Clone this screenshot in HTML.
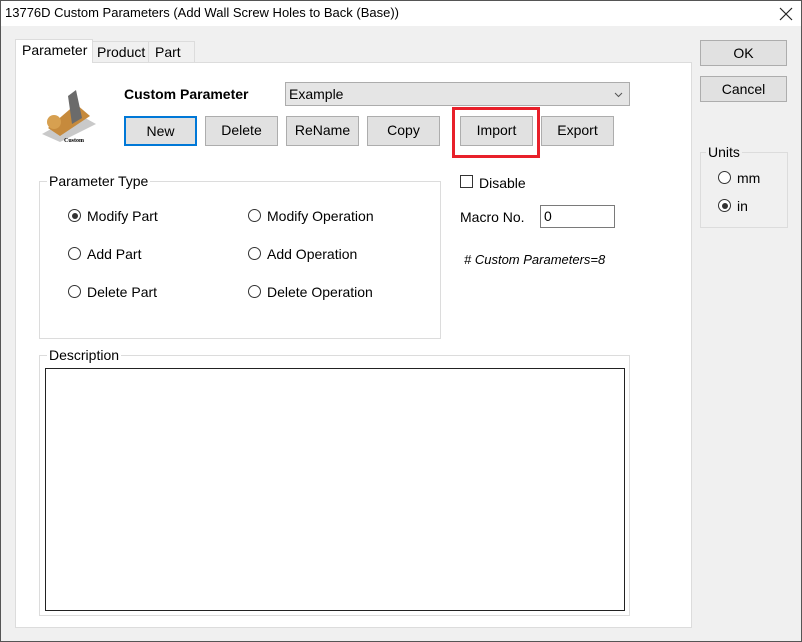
<!DOCTYPE html>
<html><head><style>
*{box-sizing:border-box;margin:0;padding:0}
body{width:802px;height:642px;background:#f0f0f0;font-family:"Liberation Sans",sans-serif;font-size:14px;color:#000;position:relative;overflow:hidden}
.a{position:absolute}
.btn{position:absolute;background:#e1e1e1;border:1px solid #adadad;text-align:center;line-height:27px;font-size:14px}
.grp{position:absolute;border:1px solid #dcdcdc}
.lg{position:absolute;top:-9px;left:7px;background:#fff;padding:0 2px}
.rad{position:absolute;width:13px;height:13px;border:1px solid #333;border-radius:50%;background:#fff}
.rad.on::after{content:"";position:absolute;left:2.5px;top:2.5px;width:6px;height:6px;border-radius:50%;background:#333}
</style></head><body>
<div class="a" style="left:0;top:0;width:802px;height:642px;border:1px solid #555;z-index:10"></div>
<div class="a" style="left:0;top:0;width:802px;height:26px;background:#fff"></div>
<div class="a" style="left:5px;top:5px;font-size:13px">13776D Custom Parameters (Add Wall Screw Holes to Back (Base))</div>
<svg class="a" style="left:779px;top:7px" width="14" height="14"><path d="M1 1L13 13M13 1L1 13" stroke="#222" stroke-width="1.2"/></svg>
<!-- tabs -->
<div class="a" style="left:15px;top:39px;width:78px;height:24px;background:#fff;border:1px solid #dcdcdc;border-bottom:none;z-index:2"></div>
<div class="a" style="left:22px;top:42px;z-index:3">Parameter</div>
<div class="a" style="left:92px;top:41px;width:57px;height:21px;border:1px solid #dcdcdc;border-bottom:none"></div>
<div class="a" style="left:97px;top:44px">Product</div>
<div class="a" style="left:148px;top:41px;width:47px;height:21px;border:1px solid #dcdcdc;border-bottom:none"></div>
<div class="a" style="left:155px;top:44px">Part</div>
<div class="a" style="left:15px;top:62px;width:677px;height:566px;background:#fff;border:1px solid #dcdcdc"></div>
<!-- icon -->
<svg class="a" style="left:38px;top:84px" width="62" height="62">
<polygon points="4,50 40,30 58,40 22,58" fill="#c9c9c9"/>
<polygon points="10,44 38,20 52,32 22,52" fill="#c68a3c"/>
<polygon points="30,12 38,6 44,34 34,40" fill="#6b6b6b"/>
<circle cx="16" cy="38" r="7" fill="#d7a050"/>
<text x="26" y="58" font-size="6" font-family="Liberation Serif" font-weight="bold">Custom</text>
</svg>
<div class="a" style="left:124px;top:86px;font-weight:bold;font-size:14px">Custom Parameter</div>
<div class="a" style="left:285px;top:82px;width:345px;height:24px;background:#e5e5e5;border:1px solid #acacac;padding:3px 3px;font-size:14px">Example<svg style="position:absolute;right:6px;top:9px" width="9" height="6"><path d="M1 1L4.5 4.5L8 1" stroke="#555" fill="none"/></svg></div>
<div class="btn" style="left:124px;top:116px;width:73px;height:30px;border:2px solid #0078d7;line-height:26px">New</div>
<div class="btn" style="left:205px;top:116px;width:73px;height:30px">Delete</div>
<div class="btn" style="left:286px;top:116px;width:73px;height:30px">ReName</div>
<div class="btn" style="left:367px;top:116px;width:73px;height:30px">Copy</div>
<div class="btn" style="left:460px;top:116px;width:73px;height:30px">Import</div>
<div class="btn" style="left:541px;top:116px;width:73px;height:30px">Export</div>
<div class="a" style="left:452px;top:107px;width:88px;height:51px;border:3px solid #e8202a"></div>
<!-- param type -->
<div class="grp" style="left:39px;top:181px;width:402px;height:158px"><div class="lg">Parameter Type</div></div>
<div class="rad on" style="left:68px;top:209px"></div><div class="a" style="left:87px;top:208px">Modify Part</div>
<div class="rad" style="left:68px;top:247px"></div><div class="a" style="left:87px;top:246px">Add Part</div>
<div class="rad" style="left:68px;top:285px"></div><div class="a" style="left:87px;top:284px">Delete Part</div>
<div class="rad" style="left:248px;top:209px"></div><div class="a" style="left:267px;top:208px">Modify Operation</div>
<div class="rad" style="left:248px;top:247px"></div><div class="a" style="left:267px;top:246px">Add Operation</div>
<div class="rad" style="left:248px;top:285px"></div><div class="a" style="left:267px;top:284px">Delete Operation</div>
<div class="a" style="left:460px;top:175px;width:13px;height:13px;border:1px solid #333;background:#fff"></div>
<div class="a" style="left:479px;top:175px">Disable</div>
<div class="a" style="left:460px;top:209px">Macro No.</div>
<div class="a" style="left:540px;top:205px;width:75px;height:23px;border:1px solid #7a7a7a;background:#fff;padding:2px 3px">0</div>
<div class="a" style="left:464px;top:252px;font-style:italic;font-size:13px">#&nbsp;Custom Parameters=8</div>
<!-- description -->
<div class="grp" style="left:39px;top:355px;width:591px;height:261px"><div class="lg">Description</div></div>
<div class="a" style="left:45px;top:368px;width:580px;height:243px;border:1px solid #222;background:#fff"></div>
<!-- right -->
<div class="btn" style="left:700px;top:40px;width:87px;height:26px;line-height:24px">OK</div>
<div class="btn" style="left:700px;top:76px;width:87px;height:26px;line-height:24px">Cancel</div>
<div class="grp" style="left:700px;top:152px;width:88px;height:76px"><div class="lg" style="background:#f0f0f0;left:5px">Units</div></div>
<div class="rad" style="left:718px;top:171px"></div><div class="a" style="left:737px;top:170px">mm</div>
<div class="rad on" style="left:718px;top:199px"></div><div class="a" style="left:737px;top:198px">in</div>
</body></html>
